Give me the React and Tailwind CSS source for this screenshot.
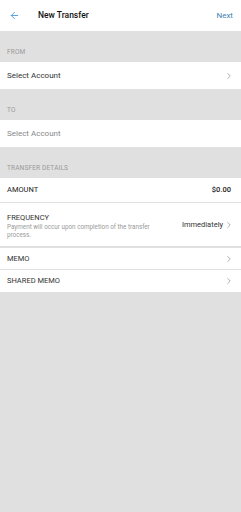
import React from 'react';
import { ArrowLeft, ChevronRight } from 'lucide-react';

function SectionLabel({ children }) {
  return (
    <div className="h-[31px] flex items-end px-[7px] pb-[4px] text-[6.5px] text-[#9a9a9a] tracking-wide">
      {children}
    </div>
  );
}

function Chevron() {
  return <ChevronRight className="w-[10px] h-[10px] text-[#666]" strokeWidth={1.25} />;
}

export default function App() {
  return (
    <div className="w-[241px] h-[512px] bg-[#e0e0e0] font-['Roboto',sans-serif] text-[#333]">
      <div className="h-[31px] bg-white flex items-center px-[9px]">
        <ArrowLeft className="w-[11px] h-[11px] text-[#4f9ad6]" strokeWidth={2} />
        <span className="ml-[18px] text-[8.5px] font-medium text-[#111]">New Transfer</span>
        <span className="ml-auto text-[8px] text-[#3f7fb0] mr-[-1px]">Next</span>
      </div>

      <SectionLabel>FROM</SectionLabel>
      <div className="h-[27px] bg-white flex items-center justify-between px-[7px]">
        <span className="text-[8px]">Select Account</span>
        <Chevron />
      </div>

      <SectionLabel>TO</SectionLabel>
      <div className="h-[27px] bg-white flex items-center px-[7px]">
        <span className="text-[8px] text-[#888]">Select Account</span>
      </div>

      <SectionLabel>TRANSFER DETAILS</SectionLabel>
      <div className="bg-white">
        <div className="h-[25px] flex items-center justify-between px-[7px] border-b border-[#e2e2e2]">
          <span className="text-[7.5px] text-[#222]">AMOUNT</span>
          <span className="text-[7.5px] font-medium text-[#222] mr-[3px]">$0.00</span>
        </div>
        <div className="h-[43px] flex items-center justify-between px-[7px]">
          <div className="w-[160px] pt-[2px]">
            <div className="text-[7.5px] leading-[10px]">FREQUENCY</div>
            <div className="text-[6.3px] leading-[8px] text-[#9a9a9a]">
              Payment will occur upon completion of the transfer process.
            </div>
          </div>
          <div className="flex items-center gap-[1px]">
            <span className="text-[7.5px]">Immediately</span>
            <Chevron />
          </div>
        </div>
      </div>
      <div className="h-[2px]" />
      <div className="bg-white">
        <div className="h-[22px] flex items-center justify-between px-[7px] border-b border-[#e2e2e2]">
          <span className="text-[7.5px]">MEMO</span>
          <Chevron />
        </div>
        <div className="h-[22px] flex items-center justify-between px-[7px]">
          <span className="text-[7.5px]">SHARED MEMO</span>
          <Chevron />
        </div>
      </div>
    </div>
  );
}
